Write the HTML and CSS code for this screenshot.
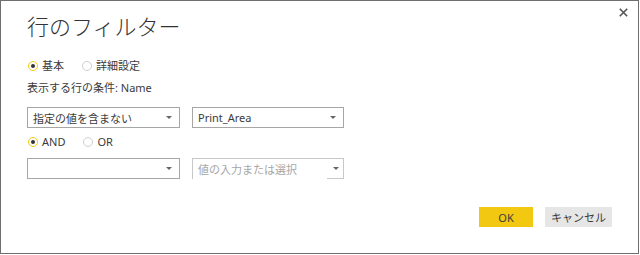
FILE: index.html
```html
<!DOCTYPE html>
<html lang="ja">
  <head>
    <meta charset="UTF-8">
    <meta name="viewport" content="width=device-width, initial-scale=1.0">
    <title>行のフィルター</title>
    <link rel="stylesheet" href="styles.css">
  </head>
  <body>
    <div class="dialog">
      <button class="close" aria-label="閉じる">
        <svg width="9" height="9" viewBox="0 0 9 9">
          <path d="M0.8 0.8 L8.2 8.2 M8.2 0.8 L0.8 8.2" stroke="#555" stroke-width="1.6" fill="none"/>
        </svg>
      </button>
      <h1 class="title">行のフィルター</h1>
      <div class="radios mode">
        <label class="radio"><span class="dot on"></span>基本</label>
        <label class="radio"><span class="dot"></span>詳細設定</label>
      </div>
      <p class="caption">表示する行の条件: Name</p>
      <div class="fields first">
        <div class="select op"><span>指定の値を含まない</span></div>
        <div class="select val"><span>Print_Area</span></div>
      </div>
      <div class="radios join">
        <label class="radio"><span class="dot on"></span>AND</label>
        <label class="radio"><span class="dot"></span>OR</label>
      </div>
      <div class="fields second">
        <div class="select op"><span></span></div>
        <div class="combo val">
          <span class="combo-input">値の入力または選択</span>
          <span class="combo-btn"></span>
        </div>
      </div>
      <div class="actions">
        <button class="btn primary">OK</button>
        <button class="btn">キャンセル</button>
      </div>
    </div>
  </body>
</html>
```

FILE: styles.css
```css
body {
  margin: 0;
  background: #fff;
  font-family: "Noto Sans", "Noto Sans CJK JP", sans-serif;
  font-size: 11px;
  color: #3b3b3b;
}
.dialog {
  position: relative;
  box-sizing: border-box;
  width: 639px;
  height: 254px;
  border: 1px solid #6e6e6e;
  padding: 0 26px;
}
.close {
  position: absolute;
  top: 7px;
  right: 10px;
  padding: 0;
  border: 0;
  background: none;
  line-height: 0;
}
.title {
  margin: 11px 0 0;
  font-family: "Noto Sans CJK JP", sans-serif;
  font-size: 22px;
  font-weight: 300;
  line-height: 26px;
  color: #333;
}
.radios {
  display: flex;
  gap: 18px;
  height: 16px;
  line-height: 16px;
}
.mode { margin-top: 20px; }
.join { margin-top: 6px; }
.radio {
  display: flex;
  align-items: center;
  margin-left: 1px;
}
.dot {
  box-sizing: border-box;
  width: 10px;
  height: 10px;
  margin-right: 4px;
  border: 1px solid #cfcfcf;
  border-radius: 50%;
  background: #fff;
  display: flex;
  align-items: center;
  justify-content: center;
}
.dot.on { border-color: #f2c811; }
.dot.on::after {
  content: '';
  width: 4px;
  height: 4px;
  border-radius: 50%;
  background: #333;
}
.radio:nth-child(2) { margin-left: 0; }
.caption {
  margin: 6px 0 0;
  height: 16px;
  line-height: 16px;
}
.fields {
  display: flex;
  gap: 12px;
  height: 21px;
}
.first { margin-top: 11px; }
.second { margin-top: 8px; }
.select {
  box-sizing: border-box;
  display: flex;
  align-items: center;
  justify-content: space-between;
  height: 21px;
  padding: 0 7px 0 5px;
  border: 1px solid #a6a6a6;
  background: #fff;
}
.select::after, .combo-btn::after {
  content: '';
  border-left: 3px solid transparent;
  border-right: 3px solid transparent;
  border-top: 3px solid #666;
}
.op { width: 153px; }
.val { width: 152px; }
.combo {
  box-sizing: border-box;
  display: flex;
  height: 21px;
}
.combo-input {
  flex: 1;
  display: flex;
  align-items: center;
  padding-left: 5px;
  border-left: 1px solid #c8c8c8;
  border-top: 1px solid #c8c8c8;
  color: #a6a6a6;
}
.combo-btn {
  box-sizing: border-box;
  width: 17px;
  display: flex;
  align-items: center;
  justify-content: center;
  padding-left: 1px;
  border: 1px solid #c8c8c8;
  border-left: 0;
}
.actions {
  display: flex;
  justify-content: flex-end;
  gap: 12px;
  margin-top: 28px;
}
.btn {
  height: 20px;
  padding: 0;
  border: 0;
  font-family: inherit;
  font-size: 11px;
  color: #3b3b3b;
  background: #e6e6e6;
  width: 67px;
}
.btn.primary {
  width: 54px;
  background: #f2c811;
}
```
